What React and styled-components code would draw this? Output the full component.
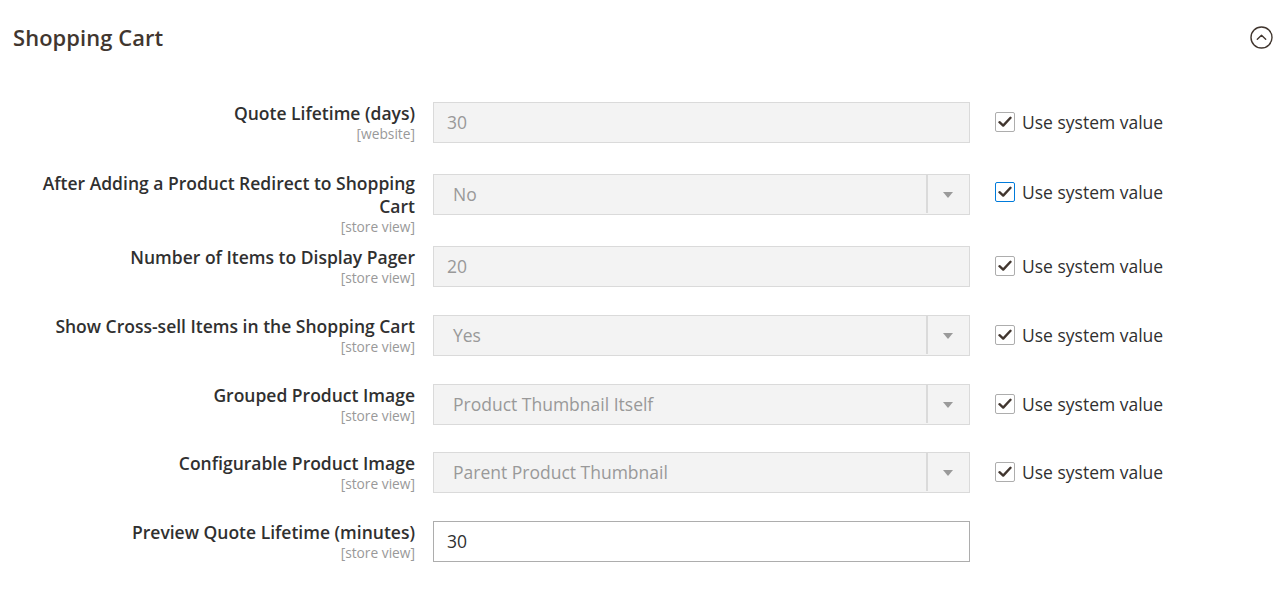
import React from "react";
import styled, { createGlobalStyle } from "styled-components";

const Global = createGlobalStyle`
  html, body { margin: 0; padding: 0; background: #fff; }
  body { font-family: "Open Sans", "Noto Sans", sans-serif; color: #303030; }
  * { box-sizing: border-box; }
`;

const Page = styled.div`
  width: 1285px;
  height: 589px;
  background: #fff;
  overflow: hidden;
`;

const Header = styled.div`
  display: flex;
  align-items: center;
  justify-content: space-between;
  height: 75px;
  padding: 0 12px 0 13px;
`;

const Title = styled.h2`
  margin: 0;
  font-size: 21.9px;
  font-weight: 600;
  color: #41362f;
  letter-spacing: 0.1px;
`;

const Toggle = styled.span`
  width: 23px;
  height: 23px;
  display: flex;
  align-items: center;
  justify-content: center;
`;

const Form = styled.div`
  padding-top: 27px;
`;

const Row = styled.div`
  display: grid;
  grid-template-columns: 415px 537px auto;
  column-gap: 18px;
  align-items: start;
  height: ${(p) => p.$h}px;
`;

const LabelCell = styled.div`
  text-align: right;
  margin-top: ${(p) => p.$shift || 0}px;
  padding-left: 30px;
`;

const LabelText = styled.div`
  font-size: 17.5px;
  font-weight: 600;
  line-height: 23px;
  color: #303030;
`;

const Scope = styled.div`
  font-size: 13.75px;
  line-height: 15px;
  margin-top: 1px;
  color: #999;
`;

const Control = styled.div`
  height: 41px;
  border: 1px solid ${(p) => (p.$disabled ? "#dadada" : "#adadad")};
  background: ${(p) => (p.$disabled ? "#f3f3f3" : "#fff")};
  display: flex;
  align-items: center;
  padding-left: ${(p) => (p.$select ? 19 : 13)}px;
  padding-bottom: 1px;
  font-size: 17.5px;
  color: ${(p) => (p.$disabled ? "#999" : "#303030")};
`;

const Value = styled.span`
  flex: 1;
`;

const ArrowBox = styled.span`
  width: 43px;
  height: 100%;
  border-left: 2px solid #dadada;
  display: flex;
  align-items: center;
  justify-content: center;
`;

const Arrow = styled.span`
  width: 0;
  height: 0;
  border-left: 5px solid transparent;
  border-right: 5px solid transparent;
  border-top: 6px solid #9a9a9a;
  margin-left: -2px;
  margin-bottom: -1px;
`;

const SystemCell = styled.label`
  display: flex;
  align-items: center;
  gap: 7px;
  height: 40px;
  padding-left: 7px;
  font-size: 17.5px;
  color: #303030;
  margin-top: ${(p) => p.$shift || 0}px;
`;

const Box = styled.span`
  width: 20px;
  height: 20px;
  flex: none;
  border: 1px solid ${(p) => (p.$focus ? "#007bdb" : "#adadad")};
  border-radius: 2px;
  background: #fff;
  display: flex;
  align-items: center;
  justify-content: center;
`;

const rows = [
  { label: ["Quote Lifetime (days)"], scope: "[website]", value: "30", type: "input", h: 72 },
  {
    label: ["After Adding a Product Redirect to Shopping", "Cart"],
    scope: "[store view]",
    value: "No",
    type: "select",
    h: 72,
    shift: -2,
    sysShift: -2,
    focus: true,
  },
  { label: ["Number of Items to Display Pager"], scope: "[store view]", value: "20", type: "input", h: 69 },
  { label: ["Show Cross-sell Items in the Shopping Cart"], scope: "[store view]", value: "Yes", type: "select", h: 69 },
  { label: ["Grouped Product Image"], scope: "[store view]", value: "Product Thumbnail Itself", type: "select", h: 68 },
  { label: ["Configurable Product Image"], scope: "[store view]", value: "Parent Product Thumbnail", type: "select", h: 69 },
  { label: ["Preview Quote Lifetime (minutes)"], scope: "[store view]", value: "30", type: "input", h: 41, enabled: true },
];

const Check = () => (
  <svg width="14" height="12" viewBox="0 0 14 12">
    <path d="M1.5 6.2 L5.2 9.6 L12.5 1.8" fill="none" stroke="#41362f" strokeWidth="2.4" strokeLinecap="round" strokeLinejoin="round" />
  </svg>
);

export default function App() {
  return (
    <Page>
      <Global />
      <Header>
        <Title>Shopping Cart</Title>
        <Toggle>
          <svg width="23" height="23" viewBox="0 0 23 23">
            <circle cx="11.5" cy="11.5" r="10.5" fill="none" stroke="#41362f" strokeWidth="1.4" />
            <path d="M7.3 13.3 L11.5 9.3 L15.7 13.3" fill="none" stroke="#41362f" strokeWidth="1.4" strokeLinecap="round" strokeLinejoin="round" />
          </svg>
        </Toggle>
      </Header>
      <Form>
        {rows.map((r, i) => (
          <Row key={i} $h={r.h}>
            <LabelCell $shift={r.shift}>
              {r.label.map((l, j) => (
                <LabelText key={j}>{l}</LabelText>
              ))}
              <Scope>{r.scope}</Scope>
            </LabelCell>
            <Control $disabled={!r.enabled} $select={r.type === "select"}>
              <Value>{r.value}</Value>
              {r.type === "select" && (
                <ArrowBox>
                  <Arrow />
                </ArrowBox>
              )}
            </Control>
            {!r.enabled ? (
              <SystemCell $shift={r.sysShift}>
                <Box $focus={r.focus}>
                  <Check />
                </Box>
                Use system value
              </SystemCell>
            ) : (
              <span />
            )}
          </Row>
        ))}
      </Form>
    </Page>
  );
}
